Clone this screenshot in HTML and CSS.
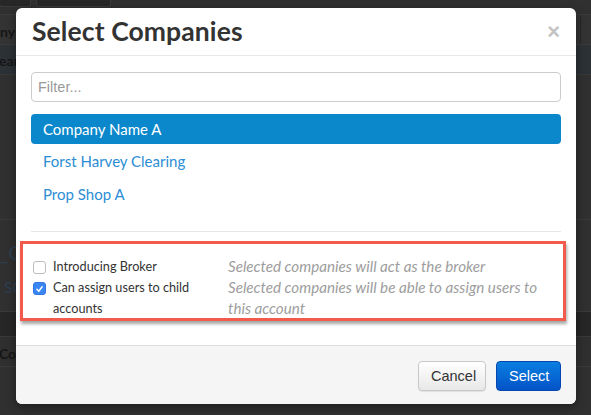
FILE: index.html
```html
<!DOCTYPE html>
<html lang="en">
<head>
<meta charset="utf-8">
<title>Select Companies</title>
<link rel="stylesheet" href="styles.css">
</head>
<body>
<div class="page">
  <div class="toolbar">
    <span class="tab tab-a"></span>
    <span class="tab tab-b"></span>
  </div>
  <div class="grid-head">
    <span class="cell">ny</span>
    <span class="cell-end"></span>
  </div>
  <div class="grid-row grid-row-active">
    <span class="cell">ear</span>
  </div>
  <div class="grid-space"></div>
  <div class="section">
    <span class="link-big">_C</span>
    <span class="link-small">SC</span>
  </div>
  <div class="band"></div>
  <div class="grid-head grid-head-low">
    <span class="cell">Con</span>
  </div>
</div>

<div class="backdrop">
  <div class="modal">
    <div class="modal-header">
      <h3 class="modal-title">Select Companies</h3>
      <span class="close">&times;</span>
    </div>
    <div class="modal-body">
      <input class="filter" type="text" placeholder="Filter...">
      <ul class="company-list">
        <li class="company company-selected">Company Name A</li>
        <li class="company">Forst Harvey Clearing</li>
        <li class="company">Prop Shop A</li>
      </ul>
      <hr class="divider">
      <div class="options">
        <div class="option">
          <label class="option-label">
            <span class="check"></span>
            <span class="option-text">Introducing Broker</span>
          </label>
          <span class="option-help">Selected companies will act as the broker</span>
        </div>
        <div class="option">
          <label class="option-label">
            <span class="check check-on">
              <svg viewBox="0 0 12 12" width="12" height="12"><path d="M3.2 6.3 L5.2 8.4 L8.9 3.6" fill="none" stroke="#fff" stroke-width="1.6" stroke-linecap="round" stroke-linejoin="round"/></svg>
            </span>
            <span class="option-text">Can assign users to child accounts</span>
          </label>
          <span class="option-help">Selected companies will be able to assign users to this account</span>
        </div>
      </div>
    </div>
    <div class="modal-footer">
      <button class="btn btn-default" type="button">Cancel</button>
      <button class="btn btn-primary" type="button">Select</button>
    </div>
  </div>
</div>
</body>
</html>
```

FILE: styles.css
```css
html, body {
  margin: 0;
  padding: 0;
}

body {
  width: 591px;
  height: 415px;
  overflow: hidden;
  background: #303030;
  font-family: "Lato", "Open Sans", sans-serif;
  position: relative;
}

/* dimmed application page behind the dialog */
.page {
  width: 591px;
  height: 415px;
  background: #303030;
  display: flex;
  flex-direction: column;
}

.toolbar {
  height: 14px;
  display: flex;
  gap: 5px;
  align-items: flex-start;
}

.tab {
  height: 6px;
  background: #272727;
  border: 1px solid #3a3a3a;
  border-top: none;
  border-radius: 0 0 3px 3px;
}

.tab-a { width: 30px; margin-left: -1px; }
.tab-b { width: 73px; }

.grid-head {
  height: 29px;
  border-top: 1px solid #3b3b3b;
  border-bottom: 1px solid #3b3b3b;
  background: #333333;
  display: flex;
  align-items: center;
  justify-content: space-between;
  font-weight: 700;
  font-size: 14px;
  color: #161616;
}

.cell {
  margin-left: 0;
  padding-top: 3px;
}

.cell-end {
  width: 10px;
  height: 29px;
  border-left: 1px solid #262626;
}

.grid-row {
  height: 29px;
  display: flex;
  align-items: center;
  font-weight: 700;
  font-size: 14px;
  color: #161616;
  border-bottom: 1px solid #383838;
}

.grid-row-active {
  background: #2c3136;
}

.grid-row .cell {
  margin-left: -1px;
  padding-top: 2px;
}

.grid-space {
  height: 144px;
  border-bottom: 1px solid #3a3a3a;
}

.section {
  height: 92px;
  display: flex;
  flex-direction: column;
  align-items: flex-start;
  border-bottom: 1px solid #3a3a3a;
  box-sizing: border-box;
}

.link-big {
  margin-top: 20px;
  margin-left: -1px;
  font-size: 20px;
  color: #2e3e4f;
}

.link-small {
  margin-top: 14px;
  margin-left: 4px;
  font-size: 15px;
  color: #2c3f52;
}

.band {
  height: 24px;
  background: #262626;
  border-bottom: 1px solid #3a3a3a;
}

.grid-head-low {
  border-top: none;
  border-bottom: 1px solid #3a3a3a;
  background: #2f2f2f;
}

.grid-head-low .cell {
  margin-left: -1px;
}

/* dialog */
.backdrop {
  position: absolute;
  inset: 0;
}

.modal {
  position: absolute;
  left: 16px;
  top: 8px;
  width: 560px;
  height: 396px;
  background: #ffffff;
  border-radius: 6px;
  box-shadow: 0 3px 10px rgba(0, 0, 0, 0.4);
  display: flex;
  flex-direction: column;
  overflow: hidden;
}

.modal-header {
  height: 48px;
  padding: 8px 16px 0 16px;
  box-sizing: border-box;
  border-bottom: 1px solid #e8e8e8;
  display: flex;
  justify-content: space-between;
  align-items: flex-start;
  flex: none;
}

.modal-title {
  margin: 0;
  font-size: 26.5px;
  line-height: 30px;
  font-weight: 700;
  color: #333333;
  letter-spacing: 0.1px;
}

.close {
  font-family: "Liberation Sans", sans-serif;
  font-size: 22px;
  line-height: 30px;
  font-weight: 700;
  color: #c4c4c4;
  margin-top: 1px;
}

.modal-body {
  flex: 1;
  padding: 16px 15px 0 15px;
  display: flex;
  flex-direction: column;
}

.filter {
  height: 30px;
  box-sizing: border-box;
  width: 530px;
  margin: 0;
  border: 1px solid #cccccc;
  border-radius: 4px;
  padding: 0 6px;
  font-family: "Liberation Sans", sans-serif;
  font-size: 14.5px;
  color: #333;
  outline: none;
}

.filter::placeholder {
  color: #9a9a9a;
}

.company-list {
  list-style: none;
  margin: 12px 0 0 0;
  padding: 0;
  height: 102px;
  display: flex;
  flex-direction: column;
  gap: 2px;
}

.company {
  height: 30px;
  line-height: 30px;
  padding-left: 12px;
  font-size: 15px;
  color: #2b8dd4;
  border-radius: 4px;
}

.company + .company + .company {
  margin-top: 1px;
}

.company-selected {
  background: #0b88cb;
  color: #ffffff;
}

.divider {
  margin: 15px 0 0 0;
  border: none;
  border-top: 1px solid #e6e6e6;
  height: 0;
}

/* highlighted option block */
.options {
  margin: 9px -5px 0 -11px;
  height: 80px;
  box-sizing: border-box;
  border: 3px solid #f25a4c;
  box-shadow: 1px 3px 3px rgba(0, 0, 0, 0.35);
  padding: 12px 0 0 10px;
  display: flex;
  flex-direction: column;
}

.option {
  display: flex;
  line-height: 21px;
}

.option-label {
  width: 195px;
  display: flex;
  align-items: flex-start;
  font-size: 12.7px;
  color: #333333;
}

.option-text {
  width: 150px;
}

.check {
  width: 11px;
  height: 11px;
  margin: 5px 7px 0 0;
  border: 1px solid #bdbdbd;
  border-radius: 3px;
  background: #ffffff;
  flex: none;
  display: flex;
  align-items: center;
  justify-content: center;
}

.check-on {
  background: #3a86f4;
  border-color: #2f76e0;
}

.check-on svg {
  display: block;
}

.option-help {
  width: 330px;
  font-size: 15.2px;
  font-style: italic;
  color: #9d9d9d;
}

.modal-footer {
  flex: none;
  height: 59px;
  box-sizing: border-box;
  border-top: 1px solid #dddddd;
  background: #f5f5f5;
  display: flex;
  justify-content: flex-end;
  align-items: flex-start;
  gap: 10px;
  padding: 15px 15px 0 0;
}

.btn {
  height: 30px;
  box-sizing: border-box;
  border-radius: 4px;
  font-family: "Liberation Sans", sans-serif;
  font-size: 14.5px;
  padding: 0 12px;
  margin: 0;
  cursor: pointer;
}

.btn-default {
  width: 68px;
  color: #333333;
  background: linear-gradient(#ffffff, #e8e8e8);
  border: 1px solid #c8c8c8;
  box-shadow: 0 1px 1px rgba(0, 0, 0, 0.08);
}

.btn-primary {
  width: 65px;
  color: #ffffff;
  background: linear-gradient(#0a7fe0, #0453c8);
  border: 1px solid #0447b0;
}
```
